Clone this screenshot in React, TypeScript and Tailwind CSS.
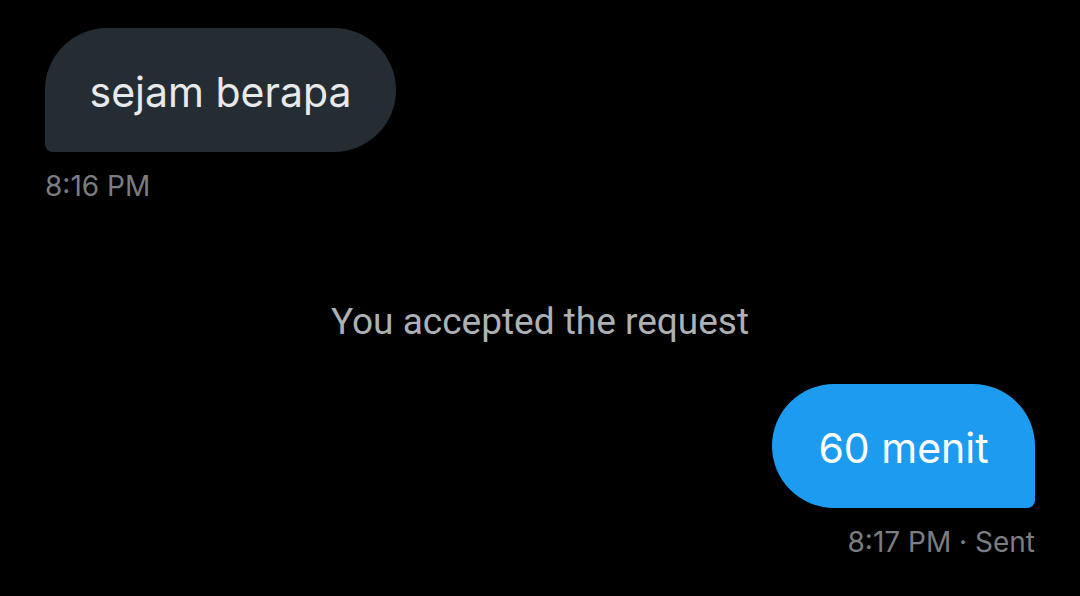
export default function App() {
  return (
    <div className="w-[1080px] h-[596px] bg-black flex flex-col px-[45px] pt-[28px] overflow-hidden" style={{ fontFamily: "Inter, Roboto, sans-serif" }}>
      <div className="flex flex-col items-start">
        <div className="h-[124px] w-[351px] pt-[6px] bg-[#252d34] rounded-tl-[62px] rounded-tr-[62px] rounded-br-[62px] rounded-bl-[8px] flex items-center justify-center text-[41px] text-[#e7e9ea]">
          sejam berapa
        </div>
        <div className="mt-[18px] text-[28px] leading-[32px] text-[#7a7e82]">8:16 PM</div>
      </div>
      <div className="mt-[98px] text-center text-[37px] leading-[44px] text-[#aeb1b4]" style={{ fontFamily: "Roboto, sans-serif" }}>You accepted the request</div>
      <div className="flex flex-col items-end mt-[40px]">
        <div className="h-[124px] w-[263px] pt-[6px] bg-[#1d9bf0] rounded-tl-[62px] rounded-tr-[62px] rounded-bl-[62px] rounded-br-[8px] flex items-center justify-center text-[41px] text-white">
          60 menit
        </div>
        <div className="mt-[18px] text-[28px] leading-[32px] text-[#7a7e82]">8:17 PM · Sent</div>
      </div>
    </div>
  );
}
